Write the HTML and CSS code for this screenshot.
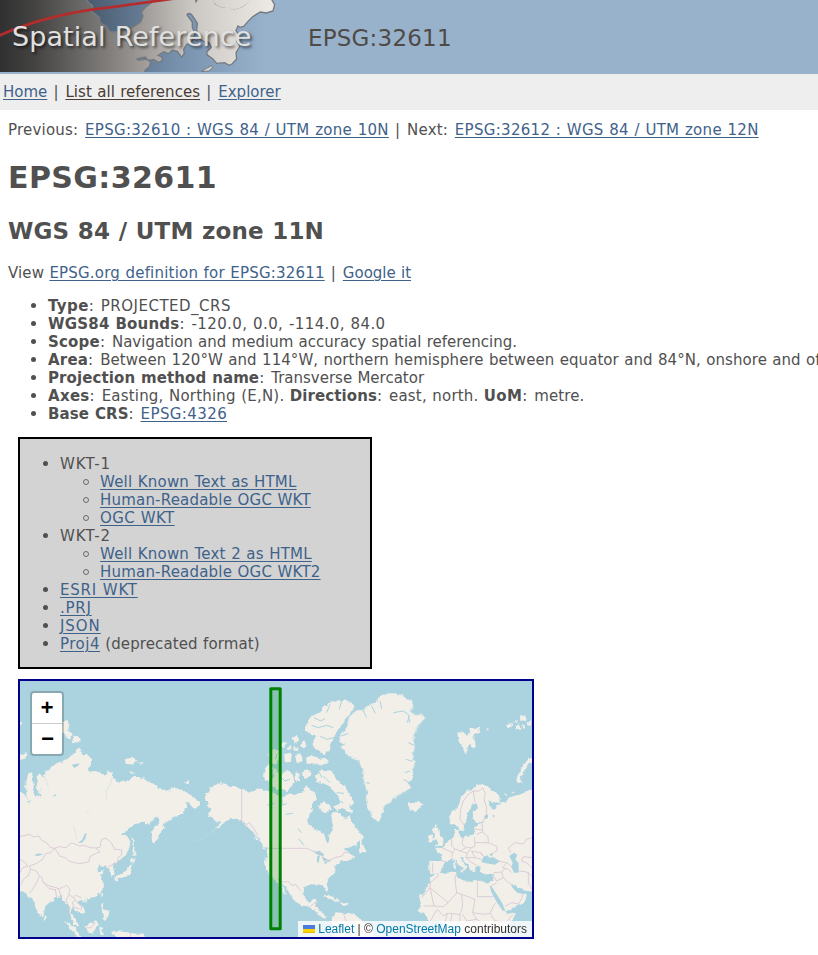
FILE: index.html
```html
<!DOCTYPE html>
<html lang="en">
<head>
<meta charset="utf-8">
<title>EPSG:32611</title>
<link rel="stylesheet" href="styles.css">
</head>
<body>
<header class="banner">
  <div class="logo">
    <svg class="logo-art" width="290" height="72" viewBox="0 0 870 216" aria-hidden="true">
      <defs>
        <linearGradient id="landshade" gradientUnits="userSpaceOnUse" x1="0" y1="0" x2="824" y2="0"><stop offset="0" stop-color="#303030"/><stop offset=".13" stop-color="#454443"/><stop offset=".45" stop-color="#8d8a87"/><stop offset=".7" stop-color="#cbc7c3"/><stop offset="1" stop-color="#eeeae6"/></linearGradient>
        <linearGradient id="seashade" gradientUnits="userSpaceOnUse" x1="250" y1="0" x2="800" y2="0"><stop offset="0" stop-color="#46586b"/><stop offset=".5" stop-color="#7690ac"/><stop offset="1" stop-color="#99b2cc"/></linearGradient>
      </defs>
      <rect width="870" height="216" fill="url(#seashade)"/>
      <path fill="url(#landshade)" stroke="#747a80" stroke-width="4" d="M-5-5H258L266 8 278 17 274 33 288 44 299 53 300 68 318 78 330 94 345 96 362 89 381 92 401 80 422 66 429 48 424 36 439 19 455 8 459-5H586L588 5 594-5H640L646 11 666 21 684 18 703 27 727 19 746 3 754-5H813L824 14 819 33 799 39 781 36 758 50 744 64 731 79 720 82 714 78 708 91 718 106 710 124 720 138 708 158 710 177 696 192 687 196 674 188 650 190 638 176 622 165 620 156 634 142 627 128 611 124 592 114 579 118 572 131 560 133 551 148 553 160 545 172 532 154 517 151 505 161 491 155 474 166 484 170 488 180 476 188 461 178 445 181 436 171 421 174 410 177 416 181 438 177 452 186 448 200 437 209 430 222H-5Z"/>
      <path fill="url(#landshade)" d="M635-5H765L746 6 727 21 703 29 684 21 666 23 646 13Z"/>
      <path fill="#7d97b2" stroke="#6f7a85" stroke-width="4" d="M561 45Q564 37 574 43L583 56 592 70 590 90 598 107 591 124 580 116 585 100 577 82 577 66Z"/>
      <path fill="#d8d3ce" stroke="#747a80" stroke-width="3" d="M603 215 620 205 635 197 638 203 626 213Z"/>
      <path fill="none" stroke="#b52c2c" stroke-width="8" d="M-5 108Q140 42 330 22L520-4"/>
    </svg>
    <span class="logo-text">Spatial Reference</span>
  </div>
  <span class="banner-title">EPSG:32611</span>
</header>
<nav class="menu"><a href="#">Home</a><i> | </i><a href="#" class="current">List all references</a><i> | </i><a href="#">Explorer</a></nav>
<main class="content">
  <p class="siblings">Previous<i>: </i><a class="s3" href="#">EPSG:32610 : WGS 84 / UTM zone 10N</a><i> | </i>Next<i>: </i><a class="s3" href="#">EPSG:32612 : WGS 84 / UTM zone 12N</a></p>
  <h1>EPSG:32611</h1>
  <h2>WGS 84 / UTM zone 11N</h2>
  <p class="view">View <a class="s2" href="#">EPSG.org definition for EPSG:32611</a><i> | </i><a href="#">Google it</a></p>
  <ul class="facts">
    <li><b class="s4">Type</b><i>: </i><span class="s5">PROJECTED_CRS</span></li>
    <li><b class="s2">WGS84 Bounds</b><i>: </i><span class="s4">-120.0, 0.0, -114.0, 84.0</span></li>
    <li><b class="s2">Scope</b><i>: </i>Navigation and medium accuracy spatial referencing.</li>
    <li><b class="s2">Area</b><i>: </i><span class="area">Between 120°W and 114°W, northern hemisphere between equator and 84°N, onshore and offshore.</span></li>
    <li><b class="s1">Projection method name</b><i>: </i>Transverse Mercator</li>
    <li><b class="s3">Axes</b><i>: </i><span class="s2">Easting, Northing (E,N).</span> <b class="s1">Directions</b><i>: </i><span class="s2">east, north.</span> <b class="s3">UoM</b><i>: </i><span class="s1">metre.</span></li>
    <li><b class="s1">Base CRS</b><i>: </i><a class="s4" href="#">EPSG:4326</a></li>
  </ul>
  <div class="formats">
    <ul>
      <li><span class="s9">WKT-1</span>
        <ul>
          <li><a class="s2" href="#">Well Known Text as HTML</a></li>
          <li><a class="s2" href="#">Human-Readable OGC WKT</a></li>
          <li><a class="s4" href="#">OGC WKT</a></li>
        </ul>
      </li>
      <li><span class="s9">WKT-2</span>
        <ul>
          <li><a class="s2" href="#">Well Known Text 2 as HTML</a></li>
          <li><a class="s2" href="#">Human-Readable OGC WKT2</a></li>
        </ul>
      </li>
      <li><a class="s7" href="#">ESRI WKT</a></li>
      <li><a class="s7" href="#">.PRJ</a></li>
      <li><a class="s9" href="#">JSON</a></li>
      <li><a class="s5" href="#">Proj4</a> <span class="s1">(deprecated format)</span></li>
    </ul>
  </div>
  <div class="map">
    <svg class="tiles" width="512" height="256" viewBox="20 681 512 256" aria-hidden="true">
      <defs>
        <filter id="rough" x="-5%" y="-5%" width="110%" height="110%"><feTurbulence type="fractalNoise" baseFrequency=".07" numOctaves="3" seed="4"/><feDisplacementMap in="SourceGraphic" scale="13" xChannelSelector="R" yChannelSelector="G"/></filter>
      </defs>
      <g class="land" transform="translate(16 676) scale(.33333)">
        <g filter="url(#rough)">
          <path d="M0 336L20 352 28 358 36 372 42 377 50 372 58 362 68 358 76 362 66 345 62 330 65 315 62 302 72 295 82 300 90 292 86 285 100 282 108 268 125 262 140 255 155 248 165 240 175 232 180 222 188 216 195 226 200 235 212 234 222 240 226 252 222 268 215 280 225 286 240 285 250 290 262 294 272 296 270 288 280 284 290 292 292 305 300 315 305 322 315 314 330 318 342 312 350 300 362 304 372 310 382 306 392 318 402 316 412 322 422 326 426 338 440 340 455 345 465 335 480 336 495 338 505 346 520 352 532 365 550 376 552 382 545 392 535 395 527 388 520 380 508 378 515 392 508 400 500 405 505 412 490 418 475 425 460 432 448 438 442 445 445 455 435 470 428 485 420 495 412 505 408 495 407 480 410 462 420 450 430 440 430 428 415 425 410 435 400 444 385 440 370 442 350 445 335 460 325 472 318 480 330 480 340 490 342 505 338 525 325 540 315 550 302 557 292 564 290 572 294 585 294 598 285 602 280 590 281 580 275 575 268 568 258 573 250 568 245 578 250 586 265 582 262 590 252 595 258 610 264 625 262 640 250 652 235 662 220 667 208 668 205 680 198 672 190 674 188 685 200 692 208 700 205 710 192 716 185 705 178 700 170 692 166 700 165 712 172 722 182 735 188 748 182 752 172 742 166 730 163 718 160 700 158 688 150 680 140 672 135 660 128 662 118 668 108 674 100 682 90 692 85 705 82 718 76 724 68 712 60 698 55 680 50 668 42 664 35 655 25 650 0 648Z"/>
          <path d="M28 330L32 300 42 290 50 292 48 308 54 325 50 352 58 362 50 372 36 372 32 350ZM12 240 30 228 36 235 24 248 8 252ZM10 138 20 134 20 144 8 150ZM140 138 155 132 160 150 156 162 168 172 166 190 150 188 145 172 138 168ZM172 180 186 178 192 195 176 205 168 200ZM326 250 345 245 360 252 355 265 330 266ZM365 258 382 262 376 268ZM342 282 354 288 348 292ZM505 318 520 316 518 324 508 324ZM347 484 356 490 352 505 358 525 358 540 350 538 350 515ZM345 543 360 550 352 562 342 558ZM346 562 348 580 340 598 325 604 308 605 295 612 300 600 320 592 335 580 342 565ZM296 606 306 606 304 618 298 614ZM254 652 262 650 258 668ZM206 668 216 670 208 678ZM255 680 265 684 262 698 275 705 280 715 272 728 266 735 258 725 268 718 258 705ZM82 718 92 724 90 734 84 732ZM146 735 165 745 182 762 196 783 186 783 170 766 155 750ZM208 752 225 742 240 732 246 742 238 758 232 774 214 768ZM250 755 262 752 256 764 264 780 254 780 252 768ZM285 768 310 766 350 772 384 774 390 790 300 790Z"/>
        </g>
        <path class="sea" d="M186 500L198 492 206 474 212 472 208 488 198 500ZM54 538 68 532 82 535 66 540ZM110 362 118 354 121 359ZM168 266 190 262 186 270 174 276Z"/>
        <path class="river" d="M272 370L270 345 285 322 288 304M54 355 62 350 72 348 76 334M85 300 92 320 98 332M172 448 180 475 182 490M210 408 220 414"/>
        <path class="border" d="M12 482L40 475 52 482 68 480 76 492 92 500 104 515 116 517 130 512 150 515 166 500 190 510 205 508 222 515 240 516 252 514 256 490 270 487 286 500 296 520 318 522 316 538 306 545 304 562 292 564 276 574M116 517 126 530 130 540 150 546 160 556 190 563 218 558 222 542 240 532 252 528 240 516M116 517 104 530 90 532 80 550 62 562 40 570 44 580 60 584 70 600 78 604 80 618 100 630 130 638 152 628 162 640 158 655 172 665 180 658 196 665M12 550 25 558 36 570 20 575 12 590M44 580 36 600 22 610 16 626M70 600 62 620 50 640 40 652M84 622 100 638 120 642M118 640 122 665M126 636 138 665M160 656 150 672 160 700 158 714M172 665 184 680 196 690 196 705M178 672 168 680 176 695 190 698M208 756 225 755 238 740M343 768V783"/>
      </g>
      <g class="land" transform="translate(190 676) scale(.33333)">
        <g filter="url(#rough)">
          <path d="M45 352L58 348 62 335 75 328 88 320 105 326 125 332 150 335 165 342 178 350 190 345 200 338 215 338 232 345 250 350 265 355 280 362 290 358 300 352 312 358 325 352 338 345 345 350 340 338 348 330 358 335 360 345 372 350 380 362 376 375 365 380 362 395 370 402 358 415 352 430 355 445 368 455 385 462 398 470 405 478 408 495 415 500 418 490 415 478 425 462 430 450 425 435 420 425 425 412 435 405 450 415 460 425 470 430 478 420 485 435 495 452 510 470 518 482 515 495 500 505 480 512 462 520 470 525 478 535 490 540 495 545 480 550 468 555 455 552 440 565 432 580 435 590 425 600 412 615 410 625 415 640 410 648 403 638 398 628 385 625 365 625 350 628 342 640 340 655 350 675 362 678 372 665 382 668 380 680 375 692 388 700 398 708 405 720 412 722 400 726 388 718 375 705 355 692 335 688 318 678 305 665 298 650 285 635 275 618 270 622 280 640 290 655 285 655 272 635 262 618 250 608 238 595 228 575 225 555 232 540 232 520 222 510 212 498 200 480 185 462 170 448 155 435 140 428 122 430 108 435 98 445 85 455 65 465 80 452 92 440 75 438 68 425 50 420 58 408 68 398 48 390 55 378 45 370Z"/>
          <path d="M222 300L228 272 240 268 250 275 246 300 236 312 225 315ZM252 275 266 290 275 300 290 282 305 290 312 310 308 330 292 345 275 338 262 340 248 330 240 318 250 305ZM235 240 250 222 266 225 268 242 258 262 245 262ZM275 205 285 195 288 205 280 220ZM282 235 300 230 308 245 300 262 285 258ZM305 185 320 177 328 192 314 204ZM315 240 335 232 338 255 322 262ZM330 205 342 193 350 208 342 220ZM348 246 362 236 388 248 415 246 412 266 390 268 365 265 350 262ZM290 212 302 206 306 220 294 222ZM312 210 324 214 320 226 310 222ZM345 150 360 125 385 108 405 90 430 75 455 72 485 78 495 95 480 115 465 130 455 150 440 165 432 185 422 205 415 225 400 235 385 222 372 215 370 195 378 180 360 172 345 165ZM375 300 390 283 415 283 430 292 440 310 455 325 470 340 478 358 492 378 485 390 478 385 488 415 470 402 455 395 440 405 432 395 450 380 445 360 425 340 410 325 395 320 378 315ZM336 290 350 280 362 285 358 305 340 308ZM316 290 328 290 330 315 318 317ZM385 390 400 378 415 385 425 400 405 410 390 402ZM505 525 512 505 520 512 530 528 515 530ZM398 662 418 658 440 668 452 675 438 677 420 668ZM450 680 470 678 478 685 460 690ZM425 730 440 708 460 712 480 710 500 722 525 740 545 760 560 790 430 790ZM0 358 10 365 20 374 30 376 28 384 18 386 20 394 8 394 0 388ZM195 475 204 492 198 494ZM215 506 228 518 224 522ZM348 352 362 360 350 364Z"/>
          <path transform="translate(510 0)" d="M-65 190L-50 165 -38 150 -35 130 -20 110 -5 100 10 105 22 88 45 80 60 62 85 52 110 52 135 62 155 78 160 95 150 105 165 118 185 115 197 125 180 145 168 165 160 190 165 215 158 235 165 262 155 285 158 305 145 320 152 335 130 350 108 360 88 382 72 390 68 412 58 438 42 430 28 405 18 375 22 350 12 320 10 290 -2 262 -15 245 -35 240 -60 212 -50 208Z"/>
        </g>
        <path class="inlet" d="M365 148L385 155 410 148 430 155M372 125 392 135 405 128M420 85 410 110M455 75 448 100M432 185 410 190 390 180M520 105 530 125M545 90 556 112M570 75 575 98M610 110 640 105 658 118 652 140M655 120 660 140M648 250 668 256M645 290 660 285M640 310 655 318M655 200 672 208M528 320 540 322M455 180 475 172M446 208 466 204M400 300 420 320M440 350 462 352M388 290 396 305M262 232 256 250M270 300 285 315 300 310M275 360 278 388 290 382M240 378 252 384M232 388 244 380M286 415 308 412M324 458 334 470M326 488 342 508M440 372 460 380"/>
        <path class="sea" d="M372 530L388 524 404 536 398 540 384 536ZM382 540 390 538 386 562 380 556ZM394 542 410 548 414 552 402 556ZM400 560 414 556 408 564ZM410 556 424 550 418 558Z"/>
        <path class="river" d="M0 498L30 490 55 476 85 458M75 662 86 668 94 675"/>
        <path class="border" d="M155 338V434L170 446 178 440 190 456 204 478M230 517H350L365 524 380 528 398 540 404 556 420 552 435 545 456 540 462 530 475 530M262 610 278 618 296 617 305 628 318 626 332 645M362 690 374 680 384 692 396 694M460 712 470 740"/>
      </g>
      <g class="land" transform="translate(360 676) scale(.33333)">
        <g filter="url(#rough)">
          <path d="M283 478L285 460 295 458 296 472 305 482 325 482 340 478 345 465 340 452 360 442 375 438 350 438 340 430 338 410 350 395 352 382 340 385 335 400 320 412 325 425 315 440 310 460 300 468 295 450 285 445 270 445 268 420 285 402 298 385 302 365 318 348 340 335 360 325 380 328 400 345 420 358 418 378 400 382 385 375 392 395 402 402 410 390 425 375 440 380 445 365 462 360 480 355 500 348 530 332V648L500 645 455 625 460 637 500 655 498 670 485 685 440 705 438 715 468 708 460 730 440 750 425 770 420 790H262L260 775 255 745 235 735 210 735 190 715 175 700 182 680 178 665 195 640 210 620 210 605 230 592 250 590 290 590 295 605 320 618 345 612 385 620 400 615 400 595 375 595 360 585 362 572 350 568 345 592 330 575 315 560 305 545 300 548 320 572 315 585 305 575 290 555 280 550 262 555 250 570 240 590 218 594 208 588 208 555 245 555 245 538 225 520 245 515 260 500 272 490Z"/>
          <path d="M143 385L150 378 160 382 175 375 188 385 180 398 165 405 150 400ZM292 172 310 165 318 180 330 170 328 155 345 158 358 155 360 170 340 178 348 210 340 220 332 200 322 215 316 235 308 215 295 195ZM380 156 388 158 382 162ZM520 240 500 255 485 275 472 300 468 318 490 325 480 310 488 290 505 265 520 258ZM228 448 238 462 240 480 252 492 248 505 225 512 232 498 222 490 225 475 218 462ZM205 480 218 475 222 490 212 500 203 498ZM282 558 288 556 287 580 282 578ZM300 584 313 582 310 592ZM0 485 8 490 8 505 18 525 0 530ZM455 345 462 350 456 355ZM435 352 442 356 438 362ZM0 732 12 736 16 750 0 760ZM440 145 456 140 460 148 446 154ZM462 135 476 132 470 142ZM478 122 496 118 500 132 484 134ZM500 138 514 134 512 150 502 146ZM464 150 480 145 484 158 468 160ZM486 144 496 150 490 160Z"/>
        </g>
        <path class="sea" d="M389 628L396 634 412 658 428 684 436 706 428 704 408 674 394 648ZM453 622 465 632 488 644 490 654 472 650 458 636ZM364 558 370 542 382 538 388 545 400 544 420 556 404 566 378 562ZM388 534 400 532 394 542ZM448 540 462 530 472 536 466 550 476 562 476 590 462 590 454 572 458 560ZM372 420 384 415 384 426 376 430ZM396 418 404 418 402 426Z"/>
        <path class="border" d="M314 450L300 430 302 400 310 375 325 355 340 345 358 345 368 335 376 352 372 370 380 395 378 420 366 440 368 468 350 475M340 345 345 380M340 458 366 462M368 468 384 482 385 500 412 512 410 525 392 535M310 483 306 505 318 515 335 515 345 510 343 483M345 500 385 500M275 492V510L284 518 278 530 245 515M284 518 300 525 318 515M278 530 275 545M300 525 322 532 335 515M322 532 318 545 335 560 350 568M335 525 345 545 365 550M335 525 362 530 372 542M362 530 368 540M318 545 345 545M218 560V590M245 555 262 558M415 555 440 560 455 572M440 560 428 575 445 580M400 590 425 588 435 578M400 600 410 615 430 605 425 588M430 605 445 620 452 622M392 632 410 620M445 580 455 590M516 485 500 490 490 504 465 500 445 515 452 530M516 545 490 542 484 555 500 560 516 575M478 585 500 588 516 600M290 590 285 610 290 650 265 680 210 635 210 620 235 600 232 592M290 650 305 655 345 670M352 612V662H400M210 635 186 665M210 635 222 690 192 690M222 690 250 692 265 680M305 655 308 690 300 715 262 712 250 720 232 700 222 715 212 735M345 670 338 710 350 730 320 735 308 715M338 710 370 715 390 712 400 690 408 680M390 712 405 735 390 750 365 740 350 730M405 735 440 738 458 715M435 690 455 680 475 684 485 668 488 655M262 712 255 740M275 715 272 740M300 715 300 735 290 745M505 588V620L516 640"/>
      </g>
      <rect class="bounds" x="270.8" y="688.8" width="9.4" height="240"/>
    </svg>
    <div class="zoom"><a href="#" class="zoom-in">+</a><a href="#" class="zoom-out">−</a></div>
    <div class="attribution"><svg width="12" height="8" aria-hidden="true"><path fill="#4c7be1" d="M0 0h12v4H0z"/><path fill="#ffd500" d="M0 4h12v3H0z"/><path fill="#e0bc00" d="M0 7h12v1H0z"/></svg> <a href="#">Leaflet</a> | © <a href="#">OpenStreetMap</a> contributors</div>
  </div>
</main>
</body>
</html>
```
FILE: styles.css
```css
body {
  margin: 0;
  color: #505050;
  background: #fff;
  font: 15px/18px Verdana, "DejaVu Sans", sans-serif;
  word-spacing: .5px;
}
a { color: #3f628a; text-underline-offset: 2px; text-decoration-thickness: 1px; }
i { font-style: normal; letter-spacing: .85px; }
.s1 { letter-spacing: .1px; }
.s2 { letter-spacing: .2px; }
.s3 { letter-spacing: .3px; }
.s4 { letter-spacing: .4px; }
.s5 { letter-spacing: .5px; }
.s7 { letter-spacing: .75px; }
.s9 { letter-spacing: .95px; }

.banner { display: flex; height: 74px; background: #99b2cc; }
.logo { position: relative; width: 308px; height: 72px; }
.logo-art { display: block; }
.logo-text {
  position: absolute; left: 12px; top: 20px;
  font-size: 27px; line-height: 34px; color: #e0e0e0; white-space: nowrap;
  letter-spacing: .08px;
  text-shadow: 2px 2px 3px rgba(0,0,0,.6);
}
.banner-title { font-size: 23px; line-height: 76px; letter-spacing: .2px; color: #504a46; }
.menu { height: 18px; padding: 9px 3px; background: #eee; }
.menu .current { color: #4a3c34; letter-spacing: .05px; }

.content { padding: 0 8px; overflow: hidden; }
.siblings { margin: 11px 0 0; letter-spacing: .2px; }
h1 { margin: 21px 0 0; font-size: 30px; line-height: 36px; letter-spacing: .4px; }
h2 { margin: 21px 0 0; font-size: 23px; line-height: 28px; letter-spacing: .12px; }
.view { margin: 19px 0 0; letter-spacing: .1px; }
.view a:last-child { letter-spacing: 0; }
ul { margin: 15px 0; padding-left: 40px; list-style: none; }
ul ul { margin: 0; }
li { position: relative; }
li::before { content: ""; position: absolute; left: -17px; top: 6px; width: 5px; height: 5px; border-radius: 50%; background: #505050; }
li li::before { width: 4px; height: 4px; border: 1px solid #6a6a6a; background: none; }
.facts { margin-bottom: 14px; }
.facts li { white-space: nowrap; }
.area { letter-spacing: .07px; }
.formats { width: 350px; margin: 14px 10px 10px; border: 2px solid #000; background: #d3d3d3; overflow: hidden; }
.formats > ul { margin: 16px 0 14px; }

.map { position: relative; width: 512px; height: 256px; margin-left: 10px; border: 2px solid #00008b; background: #aad3df; word-spacing: 0; }
.tiles { display: block; }
.land { fill: #f2efe9; }
.sea { fill: #aad3df; }
.inlet { fill: none; stroke: #aad3df; stroke-width: 3; }
.river { fill: none; stroke: #bfdce3; stroke-width: 1.5; }
.border { fill: none; stroke: #d3c0d0; stroke-width: 2.2; stroke-linejoin: round; }
.bounds { fill: rgba(0,128,0,.2); stroke: #008000; stroke-width: 3; stroke-linejoin: round; }
.zoom { position: absolute; left: 10px; top: 10px; width: 30px; border: 2px solid rgba(0,0,0,.2); border-radius: 4px; background: #fff; background-clip: padding-box; overflow: hidden; }
.zoom a { display: block; height: 30px; color: #000; font: bold 22px/34px "Liberation Mono", monospace; text-align: center; text-decoration: none; }
.zoom .zoom-in { border-bottom: 1px solid #ccc; }
.zoom .zoom-out { text-indent: 1px; }
.attribution { position: absolute; right: 0; bottom: 0; padding: 0 5px; background: rgba(255,255,255,.8); color: #333; font: 12px/16px "Liberation Sans", Arial, sans-serif; white-space: nowrap; }
.attribution a { color: #0078a8; text-decoration: none; }
```
